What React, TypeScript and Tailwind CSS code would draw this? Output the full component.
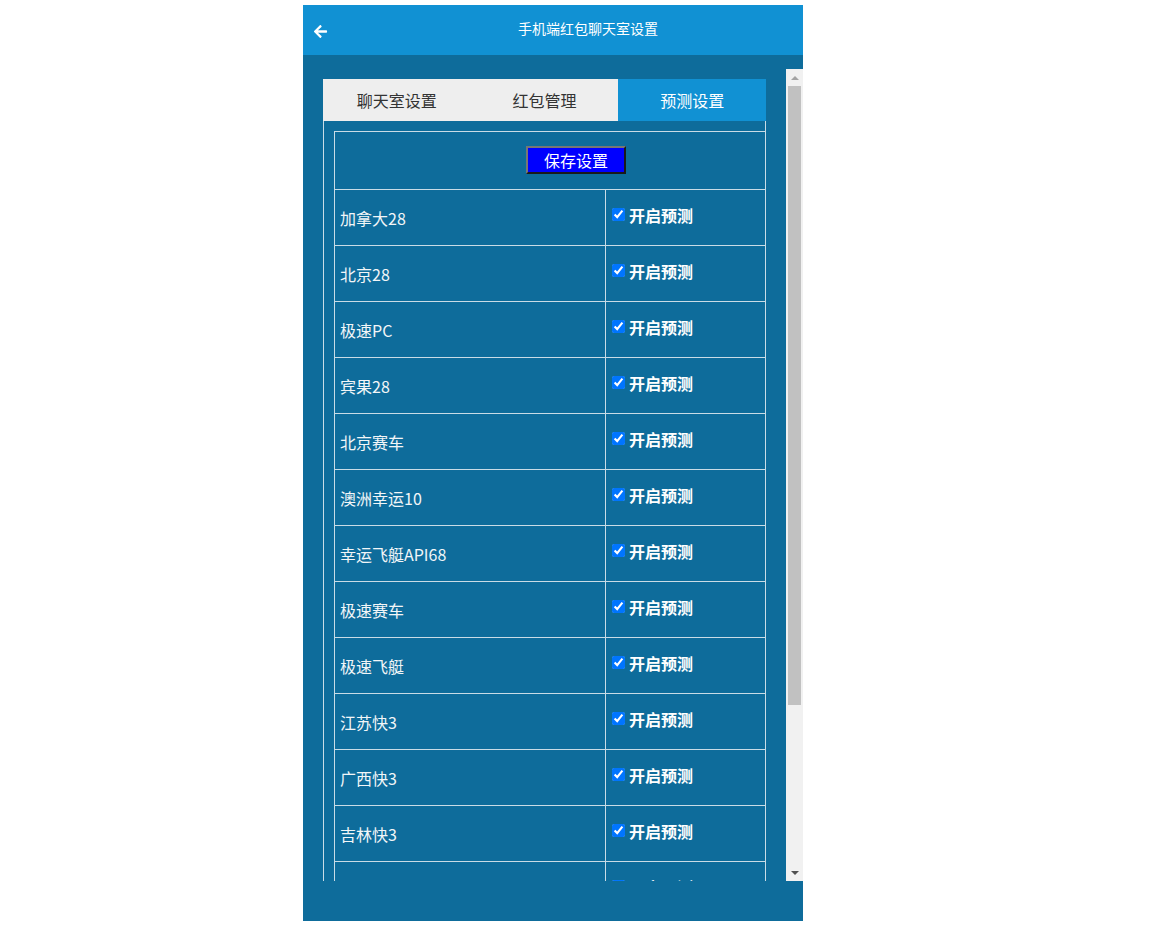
import React, { useState } from "react";
import { FaArrowLeft } from "react-icons/fa";

const games = [
  "加拿大28",
  "北京28",
  "极速PC",
  "宾果28",
  "北京赛车",
  "澳洲幸运10",
  "幸运飞艇API68",
  "极速赛车",
  "极速飞艇",
  "江苏快3",
  "广西快3",
  "吉林快3",
  "湖北快3",
  "安徽快3",
  "上海快3",
  "北京快3",
];

const tabs = ["聊天室设置", "红包管理", "预测设置"];

export default function App() {
  const [active, setActive] = useState(2);
  const [enabled, setEnabled] = useState<boolean[]>(games.map(() => true));

  //toggle one game's prediction
  const toggle = (i: number) => {
    setEnabled(enabled.map((v, idx) => (idx === i ? !v : v)));
  };

  return (
    <div
      className="min-h-screen bg-white pt-[5px]"
      style={{ fontFamily: '"Noto Sans CJK SC", "Noto Sans", sans-serif' }}
    >
      <div className="ml-[303px] w-[500px] bg-[#0e6c9b]">
        {/* Header */}
        <div className="flex h-[50px] items-center bg-[#1191d3] text-white">
          <div className="flex w-[70px] items-center pl-[10px] pt-[2px]">
            <FaArrowLeft size={15} />
          </div>
          <div className="flex-1 pb-[4px] text-center text-[14px] leading-none">
            手机端红包聊天室设置
          </div>
        </div>

        {/* Body */}
        <div className="pt-[14px] pb-[40px]">
          <div className="flex h-[812px]">
            <div className="flex-1 overflow-hidden px-[20px] pt-[10px] pb-[20px]">
              {/* Tabs */}
              <div className="grid h-[42px] grid-cols-3">
                {tabs.map((t, i) => (
                  <button
                    key={t}
                    onClick={() => setActive(i)}
                    className={
                      i === active
                        ? "flex items-center justify-center bg-[#1191d3] pb-px text-[16px] text-white"
                        : "flex items-center justify-center bg-[#eeeeee] pb-px text-[16px] text-[#333]"
                    }
                  >
                    {t}
                  </button>
                ))}
              </div>

              {/* Settings box */}
              <div className="border-x border-[#c9dce6] pl-[10px] pt-[10px]">
                <div className="-mr-px border-x border-t border-[#c9dce6]">
                  <div className="flex h-[58px] items-center justify-center border-b border-[#c9dce6] pb-px pl-[52px]">
                    <button className="h-[28px] w-[100px] border-2 border-t-[#767676] border-l-[#767676] border-b-[#1a1a1a] border-r-[#1a1a1a] bg-[#0000ff] pb-px text-[16px] leading-none text-white">
                      保存设置
                    </button>
                  </div>

                  {games.map((g, i) => (
                    <div
                      key={g}
                      className="grid h-[56px] grid-cols-[270px_1fr] border-b border-[#c9dce6]"
                    >
                      <div className="flex items-center pl-[5px] text-[16px] leading-none text-[#f2f6f8]">
                        {g}
                      </div>
                      <label className="flex items-center gap-[4px] border-l border-[#c9dce6] pl-[6px] pb-[6px] text-[16px] font-bold leading-none text-white">
                        <input
                          type="checkbox"
                          checked={enabled[i]}
                          onChange={() => toggle(i)}
                          className="m-0 h-[13px] w-[13px]"
                        />
                        开启预测
                      </label>
                    </div>
                  ))}
                </div>
              </div>
            </div>

            {/* Scrollbar */}
            <div className="flex w-[17px] flex-col bg-[#f1f1f1]">
              <div className="flex h-[17px] items-center justify-center">
                <div className="h-0 w-0 border-x-[4px] border-b-[4px] border-x-transparent border-b-[#a3a3a3]" />
              </div>
              <div className="flex-1 px-[2px]">
                <div className="h-[619px] w-full bg-[#c1c1c1]" />
              </div>
              <div className="flex h-[17px] items-center justify-center">
                <div className="h-0 w-0 border-x-[4px] border-t-[4px] border-x-transparent border-t-[#505050]" />
              </div>
            </div>
          </div>
        </div>
      </div>
    </div>
  );
}
